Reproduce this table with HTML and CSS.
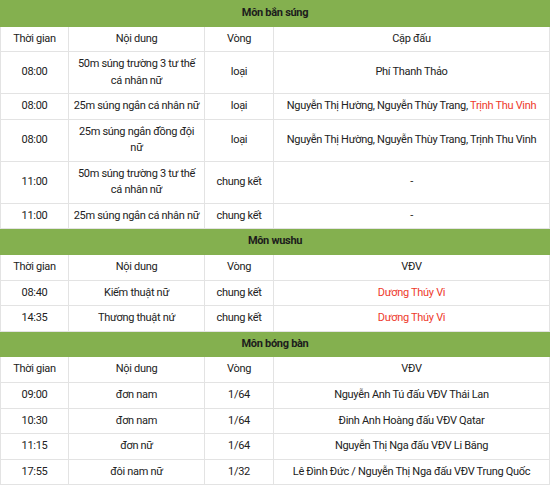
FILE: index.html
```html
<!DOCTYPE html>
<html lang="vi">
<head>
<meta charset="utf-8">
<link rel="stylesheet" href="styles.css">
</head>
<body>
<table class="schedule">
  <colgroup>
    <col class="c-time">
    <col class="c-event">
    <col class="c-round">
    <col class="c-athlete">
  </colgroup>
  <tbody>
    <tr class="sport"><td colspan="4">Môn bắn súng</td></tr>
    <tr><td>Thời gian</td><td>Nội dung</td><td>Vòng</td><td>Cặp đấu</td></tr>
    <tr><td>08:00</td><td>50m súng trường 3 tư thế cá nhân nữ</td><td>loại</td><td>Phí Thanh Thảo</td></tr>
    <tr><td>08:00</td><td>25m súng ngắn cá nhân nữ</td><td>loại</td><td>Nguyễn Thị Hường, Nguyễn Thùy Trang, <span class="hl">Trịnh Thu Vinh</span></td></tr>
    <tr><td>08:00</td><td>25m súng ngắn đồng đội nữ</td><td>loại</td><td>Nguyễn Thị Hường, Nguyễn Thùy Trang, Trịnh Thu Vinh</td></tr>
    <tr><td>11:00</td><td>50m súng trường 3 tư thế cá nhân nữ</td><td>chung kết</td><td>-</td></tr>
    <tr><td>11:00</td><td>25m súng ngắn cá nhân nữ</td><td>chung kết</td><td>-</td></tr>
    <tr class="sport"><td colspan="4">Môn wushu</td></tr>
    <tr><td>Thời gian</td><td>Nội dung</td><td>Vòng</td><td>VĐV</td></tr>
    <tr><td>08:40</td><td>Kiếm thuật nữ</td><td>chung kết</td><td><span class="hl">Dương Thúy Vi</span></td></tr>
    <tr><td>14:35</td><td>Thương thuật nứ</td><td>chung kết</td><td><span class="hl">Dương Thúy Vi</span></td></tr>
    <tr class="sport"><td colspan="4">Môn bóng bàn</td></tr>
    <tr><td>Thời gian</td><td>Nội dung</td><td>Vòng</td><td>VĐV</td></tr>
    <tr><td>09:00</td><td>đơn nam</td><td>1/64</td><td>Nguyễn Anh Tú đấu VĐV Thái Lan</td></tr>
    <tr><td>10:30</td><td>đơn nam</td><td>1/64</td><td>Đinh Anh Hoàng đấu VĐV Qatar</td></tr>
    <tr><td>11:15</td><td>đơn nữ</td><td>1/64</td><td>Nguyễn Thị Nga đấu VĐV Li Băng</td></tr>
    <tr><td>17:55</td><td>đôi nam nữ</td><td>1/32</td><td>Lê Đình Đức / Nguyễn Thị Nga đấu VĐV Trung Quốc</td></tr>
  </tbody>
</table>
</body>
</html>
```

FILE: styles.css
```css
html, body {
  margin: 0;
  padding: 0;
  background: #ffffff;
}
body {
  font-family: Roboto, "Liberation Sans", Arial, sans-serif;
  font-size: 11px;
  letter-spacing: -0.3px;
  color: #222222;
}
.schedule {
  width: 549px;
  border-collapse: collapse;
  table-layout: fixed;
}
.c-time { width: 68px; }
.c-event { width: 136px; }
.c-round { width: 69px; }
.c-athlete { width: 276px; }
.schedule td {
  border: 1px solid #e3e3e3;
  text-align: center;
  vertical-align: middle;
  padding: 4.1px 4px;
  line-height: 16.4px;
}
.sport td {
  background: #84b04f;
  font-weight: bold;
  color: #1c1c1c;
  border-color: #84b04f;
}
.hl {
  color: #ee3a2c;
}
```
